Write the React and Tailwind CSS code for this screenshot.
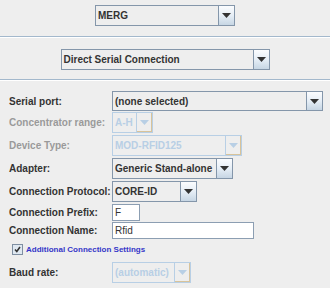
import React from "react";

const Arrow = ({ disabled }) => (
  <svg width="9" height="5" viewBox="0 0 9 5">
    <polygon points="0,0 9,0 4.5,5" fill={disabled ? "#b8cfe5" : "#333333"} />
  </svg>
);

const Combo = ({ value, width, arrowW = 17, disabled, height = 21 }) => (
  <div
    className={`flex shrink-0 ${disabled ? "border-[#b8cfe5]" : "border-[#8496aa]"} border bg-[#eeeeee]`}
    style={{ width, height }}
  >
    <div
      className={`flex-1 flex items-center pl-[2px] text-[10px] font-bold whitespace-nowrap overflow-hidden ${
        disabled ? "text-[#b8cfe5]" : "text-[#333333]"
      }`}
    >
      {value}
    </div>
    <div
      className={`flex items-center justify-center border-l ${
        disabled
          ? "border-[#b8cfe5] bg-[#eeeeee] shadow-[inset_-1px_-1px_0_#d8c39a]"
          : "border-[#8496aa] bg-gradient-to-b from-[#fbfcfe] via-[#e6eef6] to-[#c7d6e4]"
      }`}
      style={{ width: arrowW - 1 }}
    >
      <Arrow disabled={disabled} />
    </div>
  </div>
);

const Field = ({ value, width }) => (
  <div
    className="flex shrink-0 items-center h-[17px] bg-white border border-[#8c9eb2] pl-[2px] text-[10px] text-[#333333]"
    style={{ width }}
  >
    {value}
  </div>
);

const Row = ({ label, disabled, children, mt }) => (
  <div className="flex items-center" style={{ marginTop: mt }}>
    <div
      className={`w-[112px] shrink-0 pl-[9px] text-[10px] font-bold whitespace-nowrap ${
        disabled ? "text-[#9a9a9a]" : "text-[#333333]"
      }`}
    >
      {label}
    </div>
    {children}
  </div>
);

const Sep = () => (
  <div>
    <div className="h-px bg-[#a3b8cc]" />
    <div className="h-px bg-white" />
  </div>
);

export default function App() {
  return (
    <div
      className="w-[330px] h-[288px] bg-[#eeeeee] overflow-hidden"
      style={{ fontFamily: '"Liberation Sans", Arial, sans-serif' }}
    >
      <div className="flex justify-center pt-[5px] h-[36px]">
        <Combo value="MERG" width={140} />
      </div>
      <Sep />
      <div className="flex justify-center pt-[11px] h-[41px]">
        <Combo value="Direct Serial Connection" width={209} />
      </div>
      <Sep />
      <div className="pt-[10px]">
        <Row label="Serial port:">
          <Combo value="(none selected)" width={211} height={20} />
        </Row>
        <Row label="Concentrator range:" disabled mt={1}>
          <Combo value="A-H" width={41} disabled />
        </Row>
        <Row label="Device Type:" disabled mt={2}>
          <Combo value="MOD-RFID125" width={130} disabled />
        </Row>
        <Row label="Adapter:" mt={2}>
          <Combo value="Generic Stand-alone" width={121} />
        </Row>
        <Row label="Connection Protocol:" mt={2}>
          <Combo value="CORE-ID" width={85} />
        </Row>
        <Row label="Connection Prefix:" mt={2}>
          <Field value="F" width={28} />
        </Row>
        <Row label="Connection Name:" mt={1}>
          <Field value="Rfid" width={142} />
        </Row>
        <div className="flex items-center h-[15px] mt-[3px] pl-[12px]">
          <svg width="11" height="11" viewBox="0 0 11 11" className="shrink-0">
            <rect x="0.5" y="0.5" width="10" height="10" fill="#dfe8f1" stroke="#7f8fa2" />
            <path d="M3 5.5 L4.8 7.5 L8 3" stroke="#333" strokeWidth="1.6" fill="none" />
          </svg>
          <span className="ml-[3px] text-[8px] font-bold text-[#3535c8] whitespace-nowrap">
            Additional Connection Settings
          </span>
        </div>
        <Row label="Baud rate:" mt={5}>
          <Combo value="(automatic)" width={79} disabled />
        </Row>
      </div>
    </div>
  );
}
